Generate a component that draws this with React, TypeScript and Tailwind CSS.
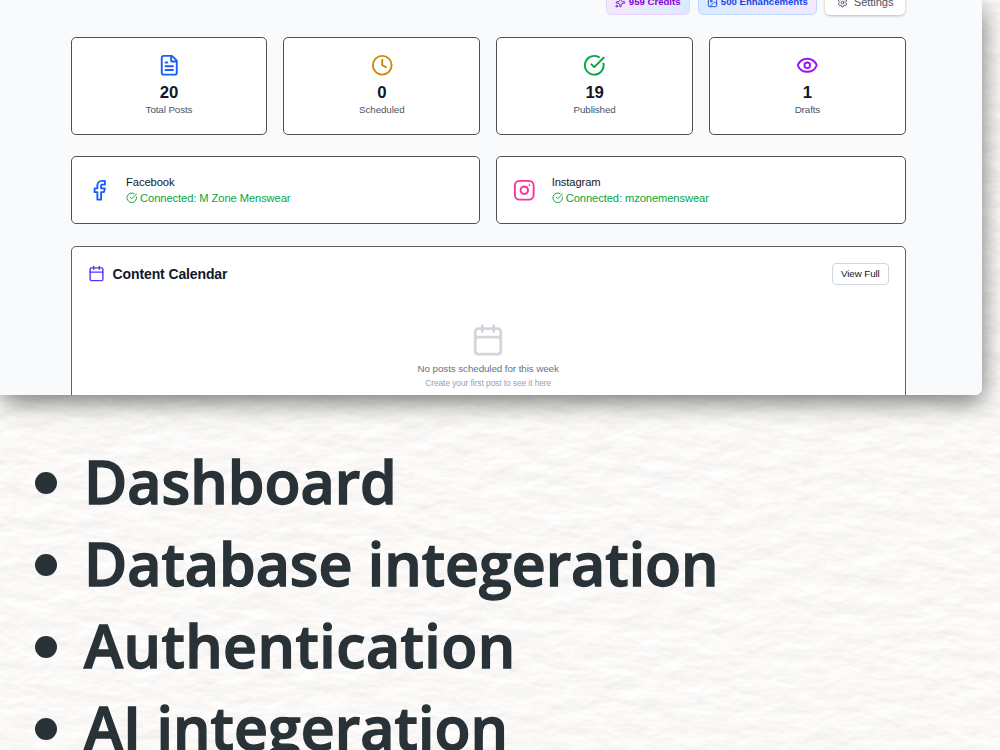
import {
  Calendar,
  CircleCheckBig,
  Clock,
  Eye,
  Facebook,
  FileText,
  Image,
  Instagram,
  Settings,
  Sparkles,
} from "lucide-react";

const stats = [
  { label: "Total Posts", value: 20, icon: FileText, color: "text-blue-600" },
  { label: "Scheduled", value: 0, icon: Clock, color: "text-yellow-600" },
  { label: "Published", value: 19, icon: CircleCheckBig, color: "text-green-600" },
  { label: "Drafts", value: 1, icon: Eye, color: "text-purple-600" },
];

const accounts = [
  { name: "Facebook", page: "M Zone Menswear", icon: Facebook, color: "text-blue-600" },
  { name: "Instagram", page: "mzonemenswear", icon: Instagram, color: "text-pink-500" },
];

const features = [
  { text: "Dashboard", spacing: "tracking-[0px]" },
  { text: "Database integeration", spacing: "tracking-[-0.02px]" },
  { text: "Authentication", spacing: "tracking-[0.45px]" },
  { text: "AI integeration", spacing: "tracking-[0.05px]" },
];

const Paper = () => (
  <svg className="absolute inset-0 w-full h-full" aria-hidden="true">
    <filter id="paper" x="0" y="0" width="100%" height="100%" colorInterpolationFilters="sRGB">
      <feTurbulence type="fractalNoise" baseFrequency="0.035 0.07" numOctaves={5} seed={8} />
      <feColorMatrix values="0 0 0 0 0  0 0 0 0 0  0 0 0 0 0  1 0 0 0 0" />
      <feDiffuseLighting surfaceScale={0.45} diffuseConstant={1.065} lightingColor="#fefcfa">
        <feDistantLight azimuth={245} elevation={68} />
      </feDiffuseLighting>
    </filter>
    <rect width="100%" height="100%" transform="rotate(6 500 375) scale(1.15) translate(-60 -45)" filter="url(#paper)" />
  </svg>
);

const Header = () => (
  <div className="flex items-center justify-end gap-2 h-[27px]">
    <div className="flex items-center gap-[3px] h-[26px] w-[84px] pl-2 pt-px rounded-[5px] border border-purple-200 bg-linear-to-r from-purple-100 to-blue-100 text-purple-700 text-[9.6px] font-bold whitespace-nowrap">
      <Sparkles className="w-[11px] h-[11px] shrink-0" />
      <span className="tracking-[0px]">959 Credits</span>
    </div>
    <div className="flex items-center gap-[3px] h-[26px] w-[119px] pl-2 pt-px rounded-[5px] border border-blue-200 bg-linear-to-r from-blue-100 to-purple-100 text-blue-700 text-[9.6px] font-bold whitespace-nowrap">
      <Image className="w-[11px] h-[11px] shrink-0" />
      <span className="tracking-[0px]">500 Enhancements</span>
    </div>
    <button className="flex items-center gap-[6px] h-[27px] w-[80px] pl-[12px] pt-px rounded-[5px] bg-white text-gray-600 text-[11.2px] shadow-[0_1px_3px_rgba(0,0,0,0.25)]">
      <Settings className="w-[11px] h-[11px] shrink-0" />
      <span className="tracking-[-0.1px]">Settings</span>
    </button>
  </div>
);

const Dashboard = () => (
  <div className="relative w-[982px] h-[395px] overflow-hidden rounded-br-[7px] bg-gray-50 pl-[70.6px] pr-[76.2px]">
    <div className="-mt-3 -translate-x-px">
      <Header />
    </div>

    <div className="grid grid-cols-4 gap-4 mt-[22px]">
      {stats.map(({ label, value, icon: Icon, color }) => (
        <div key={label} className="flex flex-col items-center h-[98px] pt-4 rounded-[5px] border border-[#505050] bg-white">
          <Icon className={`w-[22.5px] h-[22.5px] ${color}`} />
          <div className="mt-[4px] text-[16.8px] leading-6 tracking-[-0.2px] font-bold text-gray-900">{value}</div>
          <div className="-mt-[2px] text-[9.8px] leading-[13px] tracking-[-0.1px] text-gray-600">{label}</div>
        </div>
      ))}
    </div>

    <div className="grid grid-cols-2 gap-4 mt-[21px]">
      {accounts.map(({ name, page, icon: Icon, color }) => (
        <div key={name} className="flex items-center h-[68px] pl-4 rounded-[5px] border border-[#505050] bg-white">
          <Icon className={`w-[22.5px] h-[22.5px] ${color}`} />
          <div className="ml-4 text-[11.2px] leading-[17px] tracking-[-0.1px] text-gray-900">
            <div className="relative top-px">{name}</div>
            <div className="flex items-center gap-[2.5px] text-green-600">
              <CircleCheckBig className="w-[11.5px] h-[11.5px] -mt-px" />
              Connected: {page}
            </div>
          </div>
        </div>
      ))}
    </div>

    <div className="mt-[21.5px] h-[200px] rounded-[5px] border border-[#606060] bg-white px-4 pt-4">
      <div className="flex items-center justify-between">
        <div className="flex items-center gap-2 pt-px text-[14px] tracking-[-0.12px] font-bold text-gray-900">
          <Calendar className="w-[17px] h-[17px] -mt-px text-indigo-600" />
          Content Calendar
        </div>
        <button className="h-[22px] w-[57px] pt-px rounded-[4px] border border-gray-300 bg-white text-[9.8px] tracking-[-0.1px] text-gray-900">
          View Full
        </button>
      </div>
      <div className="flex flex-col items-center mt-[38px]">
        <Calendar className="w-[34px] h-[34px] text-gray-300" />
        <div className="mt-[5px] text-[9.8px] leading-[14px] tracking-[-0.08px] text-gray-500">No posts scheduled for this week</div>
        <div className="mt-px text-[8.4px] leading-[12px] tracking-[-0.07px] text-gray-400">Create your first post to see it here</div>
      </div>
    </div>
  </div>
);

export default function App() {
  return (
    <div className="relative w-[1000px] h-[750px] overflow-hidden bg-[#f8f7f5] font-['Liberation_Sans',sans-serif]">
      <Paper />
      <div className="relative w-[982px] rounded-br-[7px] shadow-[2px_8px_24px_-1px_rgba(60,64,58,0.7)]">
        <Dashboard />
      </div>
      <ul className="relative mt-[45px] pl-[35px] font-['Open_Sans',sans-serif] text-[59px] leading-[82px] font-semibold text-[#283237] [-webkit-text-stroke:1.4px_#283237]">
        {features.map(({ text, spacing }) => (
          <li key={text} className="flex items-center gap-[27px] h-[82px] whitespace-nowrap">
            <span className="mt-[3px] w-[22px] h-[22px] rounded-full bg-[#283237]" />
            <span className={spacing}>{text}</span>
          </li>
        ))}
      </ul>
    </div>
  );
}
